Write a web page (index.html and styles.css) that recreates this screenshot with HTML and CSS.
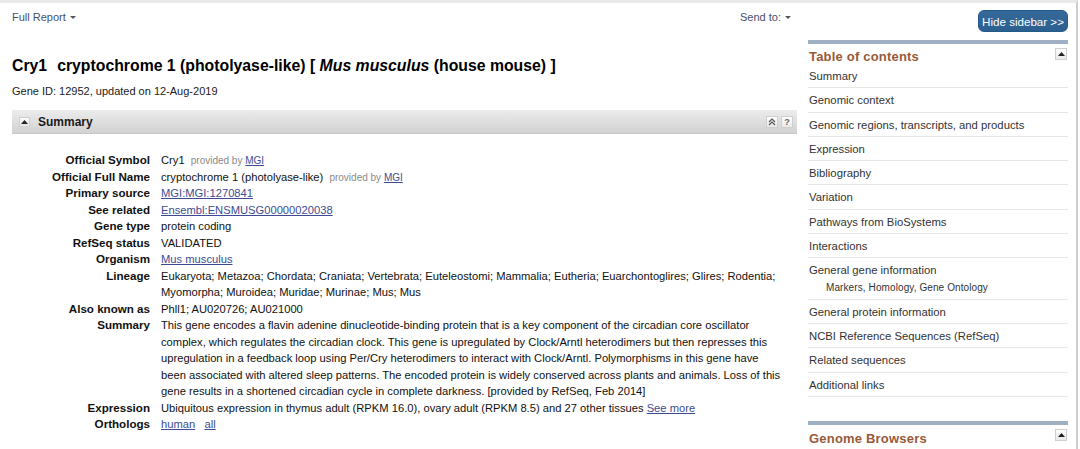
FILE: index.html
```html
<!DOCTYPE html>
<html>
<head>
<meta charset="utf-8">
<title>Cry1 cryptochrome 1 (photolyase-like) [ Mus musculus (house mouse) ] - Gene - NCBI</title>
<link rel="stylesheet" href="styles.css">
</head>
<body>
<div class="page">
  <div class="main">
    <div class="topbar">
      <span class="menu">Full Report <span class="caret"></span></span>
      <span class="menu">Send to: <span class="caret"></span></span>
    </div>
    <h1 class="title"><span class="gn">Cry1</span>cryptochrome 1 (photolyase-like) [ <em>Mus musculus</em> (house mouse) ]</h1>
    <div class="geneid">Gene ID: 12952, updated on 12-Aug-2019</div>

    <div class="secbar">
      <span class="toggle"><svg width="7" height="4" viewBox="0 0 7 4"><path d="M0 4 L3.5 0 L7 4Z" fill="#222"/></svg></span>
      <span class="sectitle">Summary</span>
      <span class="bar-icons">
        <span class="sq"><svg width="8" height="8" viewBox="0 0 8 8"><path d="M1 4 L4 1 L7 4 M1 7 L4 4 L7 7" fill="none" stroke="#555" stroke-width="1.2"/></svg></span>
        <span class="sq q">?</span>
      </span>
    </div>

    <dl class="details">
      <dt>Official Symbol</dt>
      <dd>Cry1 <span class="prov">provided by <a href="#">MGI</a></span></dd>
      <dt>Official Full Name</dt>
      <dd>cryptochrome 1 (photolyase-like) <span class="prov">provided by <a href="#">MGI</a></span></dd>
      <dt>Primary source</dt>
      <dd><a href="#">MGI:MGI:1270841</a></dd>
      <dt>See related</dt>
      <dd><a href="#">Ensembl:ENSMUSG00000020038</a></dd>
      <dt>Gene type</dt>
      <dd>protein coding</dd>
      <dt>RefSeq status</dt>
      <dd>VALIDATED</dd>
      <dt>Organism</dt>
      <dd><a href="#">Mus musculus</a></dd>
      <dt>Lineage</dt>
      <dd>Eukaryota; Metazoa; Chordata; Craniata; Vertebrata; Euteleostomi; Mammalia; Eutheria; Euarchontoglires; Glires; Rodentia; Myomorpha; Muroidea; Muridae; Murinae; Mus; Mus</dd>
      <dt>Also known as</dt>
      <dd>Phll1; AU020726; AU021000</dd>
      <dt>Summary</dt>
      <dd>This gene encodes a flavin adenine dinucleotide-binding protein that is a key component of the circadian core oscillator complex, which regulates the circadian clock. This gene is upregulated by Clock/Arntl heterodimers but then represses this upregulation in a feedback loop using Per/Cry heterodimers to interact with Clock/Arntl. Polymorphisms in this gene have been associated with altered sleep patterns. The encoded protein is widely conserved across plants and animals. Loss of this gene results in a shortened circadian cycle in complete darkness. [provided by RefSeq, Feb 2014]</dd>
      <dt>Expression</dt>
      <dd>Ubiquitous expression in thymus adult (RPKM 16.0), ovary adult (RPKM 8.5) and 27 other tissues <a href="#">See more</a></dd>
      <dt>Orthologs</dt>
      <dd><a href="#">human</a>&nbsp;&nbsp; <a href="#">all</a></dd>
    </dl>
  </div>

  <aside class="sidebar">
    <div class="hide-row"><button class="hide-btn">Hide sidebar &gt;&gt;</button></div>
    <div class="portlet">
      <div class="portlet-head">
        <span class="portlet-title">Table of contents</span>
        <span class="sq up"><svg width="7" height="4" viewBox="0 0 7 4"><path d="M0 4 L3.5 0 L7 4Z" fill="#222"/></svg></span>
      </div>
      <ul class="toc">
        <li>Summary</li>
        <li>Genomic context</li>
        <li>Genomic regions, transcripts, and products</li>
        <li>Expression</li>
        <li>Bibliography</li>
        <li>Variation</li>
        <li>Pathways from BioSystems</li>
        <li>Interactions</li>
        <li>General gene information<div class="sub">Markers, Homology, Gene Ontology</div></li>
        <li>General protein information</li>
        <li>NCBI Reference Sequences (RefSeq)</li>
        <li>Related sequences</li>
        <li>Additional links</li>
      </ul>
    </div>
    <div class="portlet second">
      <div class="portlet-head">
        <span class="portlet-title">Genome Browsers</span>
        <span class="sq up"><svg width="7" height="4" viewBox="0 0 7 4"><path d="M0 4 L3.5 0 L7 4Z" fill="#222"/></svg></span>
      </div>
    </div>
  </aside>
</div>
</body>
</html>
```

FILE: styles.css
```css
html, body {
  margin: 0;
  padding: 0;
  background: #fff;
}
body {
  font-family: "Liberation Sans", Arial, sans-serif;
  color: #111;
  overflow: hidden;
}
.page {
  display: flex;
  height: 446px;
  width: 1076px;
  border-top: 3px solid #e9e9ec;
  border-right: 2px solid #cfcfd2;
  overflow: hidden;
}
.main {
  width: 785px;
  padding-left: 12px;
}
.topbar {
  height: 28px;
  display: flex;
  justify-content: space-between;
  align-items: center;
  font-size: 11px;
  color: #48506a;
  padding-right: 6px;
}
.menu {
  display: inline-flex;
  align-items: center;
}
.caret {
  display: inline-block;
  width: 0;
  height: 0;
  margin-left: 4px;
  border-left: 3px solid transparent;
  border-right: 3px solid transparent;
  border-top: 3px solid #555;
}
.title {
  margin: 25px 0 0;
  font-size: 15.8px;
  line-height: 20px;
  font-weight: bold;
  color: #000;
}
.title .gn {
  margin-right: 10px;
}
.geneid {
  margin-top: 8px;
  font-size: 11px;
  line-height: 14px;
  color: #222;
}
.secbar {
  margin-top: 12px;
  height: 24px;
  display: flex;
  align-items: center;
  background: linear-gradient(#ececec, #d2d2d2);
  border-bottom: 1px solid #c8c8c8;
  box-sizing: border-box;
  padding: 0 4px 0 7px;
}
.toggle {
  width: 11px;
  height: 10px;
  background: linear-gradient(#fafafa, #e6e6e6);
  border: 1px solid #cfcfcf;
  box-sizing: border-box;
  display: flex;
  align-items: center;
  justify-content: center;
}
.sectitle {
  margin-left: 8px;
  font-size: 12px;
  font-weight: bold;
  color: #1a1a1a;
}
.bar-icons {
  margin-left: auto;
  display: flex;
  gap: 3px;
}
.sq {
  width: 12px;
  height: 12px;
  box-sizing: border-box;
  border: 1px solid #cfcfcf;
  background: linear-gradient(#fdfdfd, #e9e9e9);
  display: flex;
  align-items: center;
  justify-content: center;
  font-size: 9px;
  font-weight: bold;
  color: #666;
}
.details {
  margin: 18px 0 0;
  display: grid;
  grid-template-columns: 138px 625px;
  column-gap: 11px;
  font-size: 11.2px;
  line-height: 16.5px;
}
.details dt {
  text-align: right;
  font-weight: bold;
  font-size: 11.6px;
  color: #111;
}
.details dd {
  margin: 0;
  color: #111;
}
a {
  color: #3d4c92;
  text-decoration: underline;
}
.prov {
  font-size: 10px;
  line-height: 1;
  color: #8a8a8a;
  margin-left: 3px;
}
.sidebar {
  width: 260px;
  margin-left: 11px;
}
.hide-row {
  display: flex;
  justify-content: flex-end;
  padding-top: 7px;
}
.hide-btn {
  height: 22px;
  width: 90px;
  padding: 0;
  border: 1px solid #245a8a;
  border-radius: 6px;
  background: linear-gradient(#34699a, #2a5f90);
  color: #fff;
  font-family: "Liberation Sans", Arial, sans-serif;
  font-size: 11.6px;
}
.portlet {
  margin-top: 8px;
  border-top: 4px solid #9eb0c2;
}
.portlet-head {
  margin-top: 5px;
  height: 15px;
  display: flex;
  align-items: center;
  justify-content: space-between;
}
.portlet-title {
  font-size: 13px;
  font-weight: bold;
  color: #985a39;
  letter-spacing: 0.2px;
  padding-left: 1px;
}
.portlet-head .sq {
  margin-right: 1px;
  margin-top: -6px;
}
.toc {
  list-style: none;
  margin: 0;
  padding: 0;
  font-size: 11.3px;
  color: #333;
}
.toc li {
  padding: 5px 0 4.3px 1px;
  line-height: 14px;
  border-bottom: 1px solid #e6e6e6;
}
.toc .sub {
  font-size: 10px;
  line-height: 13px;
  margin-top: 4px;
  padding-left: 17px;
  letter-spacing: 0.1px;
}
.portlet.second {
  margin-top: 24px;
}
.portlet.second .portlet-head {
  margin-top: 6px;
}
```
